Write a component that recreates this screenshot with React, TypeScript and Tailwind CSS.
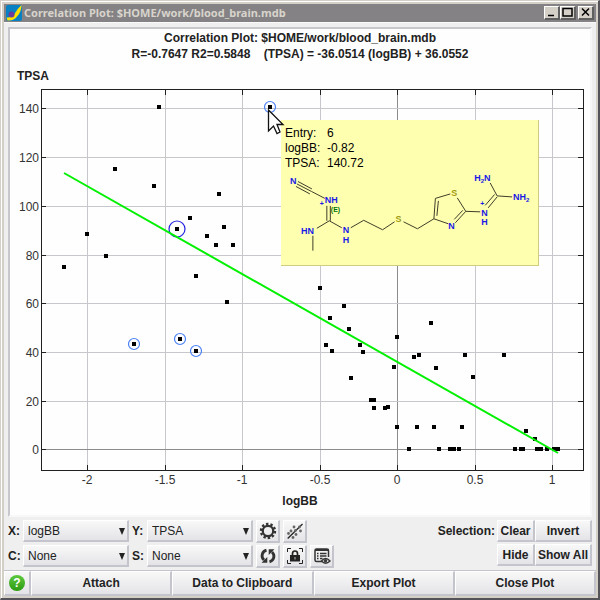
import React from "react";

type Point = [number, number];

const points: Point[] = [
  [159, 107], [115, 169], [154, 186], [219, 194], [190, 218], [177, 229], [224, 227],
  [207, 236], [216, 245], [233, 245], [87, 234], [106, 256], [64, 267], [196, 276],
  [270, 107], [227, 302], [134, 344], [180, 339], [196, 351], [320, 288], [344, 306],
  [330, 318], [349, 329], [326, 345], [332, 351], [360, 345], [363, 352], [394, 367],
  [351, 378], [371, 400], [374, 400], [374, 408], [385, 408], [388, 407], [397, 337],
  [431, 323], [414, 357], [419, 355], [436, 368], [465, 355], [473, 377], [504, 355],
  [397, 427], [417, 427], [434, 427], [462, 427], [526, 431], [535, 439], [409, 449],
  [439, 449], [450, 449], [454, 449], [459, 449], [515, 449], [521, 449], [523, 449],
  [537, 449], [541, 449], [547, 449], [554, 449], [558, 449],
];

const selected: Point[] = [[270, 107], [134, 344], [180, 339], [196, 351]];

const xTicks: [number, string][] = [
  [87, "-2"], [165, "-1.5"], [242, "-1"], [320, "-0.5"], [397, "0"], [475, "0.5"], [552, "1"],
];
const yTicks: [number, string][] = [
  [108, "140"], [157, "120"], [206, "100"], [255, "80"], [303, "60"], [352, "40"], [401, "20"], [449, "0"],
];

function Chart() {
  return (
    <svg viewBox="10 84 580 408" className="block w-full" role="img" aria-label="TPSA against logBB">
      <g shapeRendering="crispEdges">
        {xTicks.map(([x, t]) => (
          <line key={t} x1={x + 0.5} x2={x + 0.5} y1={90} y2={470} stroke={t === "0" ? "#8c8c8c" : "#c8c8cc"} />
        ))}
        {yTicks.map(([y, t]) => (
          <line key={t} x1={42} x2={583} y1={y + 0.5} y2={y + 0.5} stroke={t === "0" ? "#8c8c8c" : "#c8c8cc"} />
        ))}
        <rect x={41.5} y={89.5} width={542} height={381} fill="none" stroke="#202020" />
        {xTicks.map(([x, t]) => (
          <path key={t} d={`M${x + 0.5} 90v5M${x + 0.5} 465v5`} stroke="#202020" />
        ))}
        {yTicks.map(([y, t]) => (
          <path key={t} d={`M42 ${y + 0.5}h4M578 ${y + 0.5}h5`} stroke="#202020" />
        ))}
      </g>
      <g fontFamily="'Liberation Sans', Arial, sans-serif" fill="#333333">
        {xTicks.map(([x, t]) => (
          <text key={t} x={x} y={484} textAnchor="middle" className="text-xs">{t}</text>
        ))}
        {yTicks.map(([y, t]) => (
          <text key={t} x={39} y={y + 5} textAnchor="end" className="text-xs">{t}</text>
        ))}
      </g>
      <g shapeRendering="crispEdges">
        {points.map(([x, y], i) => (
          <rect key={i} x={x - 2} y={y - 2} width={4} height={4} fill="#000" />
        ))}
      </g>
      {selected.map(([x, y]) => (
        <circle key={x} cx={x} cy={y} r={5.5} fill="none" stroke="#4a80f5" strokeWidth={1.2} />
      ))}
      <circle cx={177} cy={229} r={8} fill="none" stroke="#2222e0" strokeWidth={1.2} />
      <line x1={64} y1={173} x2={558} y2={453} stroke="#00f000" strokeWidth={2} />
    </svg>
  );
}

function Molecule() {
  return (
    <svg viewBox="281 172 258 94" className="block w-full" role="img" aria-label="Molecular structure">
      <g fill="none" stroke="#3c3c28" strokeWidth={1}>
        <path d="M298 182.500L312 190M297 185L311.500 192.500M296 187.500L310 195M311.500 192.500L325 199.500" />
        <path d="M327 207V222M330.500 207V222M329.500 222L317 229.500M329.500 222L342 229M313 237V252" />
        <path d="M351 229L364 221.500L383 231L395 223M404 223L418 230L434.500 220L436 199.500L451 195M437.500 217L439 202M434.500 220L449 225M456 224L466.500 212.500M455 220.500L463.500 211.500M466.500 212.500L458 199M466.500 212.500L481 213M489 209L498 198M486 206.500L495.500 195.500M498 197L491 184M498 197L513 198" />
      </g>
      <g fontFamily="'Liberation Sans', Arial, sans-serif" fontWeight={700} fontSize={9} fill="#1a1ae6">
        <text x={290} y={185}>N</text>
        <text x={325} y={204}>NH</text>
        <text x={320} y={207} fontSize={7}>+</text>
        <text x={301} y={235}>HN</text>
        <text x={343} y={234}>N</text>
        <text x={343} y={244}>H</text>
        <text x={449} y={230}>N</text>
        <text x={482} y={217}>N</text>
        <text x={482} y={226}>H</text>
        <text x={481} y={207} fontSize={7}>+</text>
        <text x={475} y={182}>H<tspan fontSize={6} dy={2}>2</tspan><tspan dy={-2}>N</tspan></text>
        <text x={514} y={201}>NH<tspan fontSize={6} dy={2}>2</tspan></text>
        <text x={331} y={213} fontSize={7} fill="#007000">(E)</text>
        <text x={396} y={223} fill="#a09a10">S</text>
        <text x={452} y={197} fill="#a09a10">S</text>
      </g>
    </svg>
  );
}

function EntryTip() {
  const rows = [["Entry:", "6"], ["logBB:", "-0.82"], ["TPSA:", "140.72"]];
  return (
    <div className="absolute left-[271px] top-9 w-[258px] border-r border-b border-[#d0cc80] bg-[#ffffb0]">
      <dl className="grid grid-cols-[42px_1fr] px-1 pt-[6px] text-xs leading-[15px] text-black">
        {rows.map(([k, v]) => (
          <React.Fragment key={k}>
            <dt>{k}</dt>
            <dd>{v}</dd>
          </React.Fragment>
        ))}
      </dl>
      <Molecule />
    </div>
  );
}

function Pointer() {
  return (
    <svg viewBox="0 0 18 28" className="absolute left-[257px] top-[25px] h-7 w-[18px]" aria-hidden="true">
      <path d="M1.500 1L16 15.500H10L13 23L10 24.500L6.500 17L1.500 22Z" fill="#fff" stroke="#111" strokeWidth={1.300} />
    </svg>
  );
}

const raised =
  "flex items-center justify-center border-t border-l border-r-2 border-b-2 border-t-white border-l-white border-r-[#c4c4cc] border-b-[#c4c4cc] bg-linear-to-b from-[#f8f8f8] to-[#e4e4e8]";

function Picker({ label, value, options }: { label: string; value: string; options: string[] }) {
  return (
    <label className="flex items-center font-bold">
      <span className="w-[15px]">{label}:</span>
      <span className="relative block">
        <select
          defaultValue={value}
          className="block h-[22px] w-[106px] appearance-none border-t border-l border-r-2 border-b-2 border-t-white border-l-white border-r-[#c4c4cc] border-b-[#c4c4cc] bg-linear-to-b from-[#f8f8f8] to-[#e4e4e8] pl-1 text-xs font-normal"
        >
          {options.map((o) => (
            <option key={o}>{o}</option>
          ))}
        </select>
        <svg viewBox="0 0 6 7" className="pointer-events-none absolute top-2 right-1 h-[7px] w-[6px]" aria-hidden="true">
          <path d="M0 0H6L3 7Z" fill="#222" />
        </svg>
      </span>
    </label>
  );
}

function IconButton({ label, children }: { label: string; children: React.ReactNode }) {
  return (
    <button type="button" aria-label={label} className={`${raised} h-[23px] w-6`}>
      <svg viewBox="0 0 18 18" className="h-[18px] w-[18px] shrink-0" aria-hidden="true">
        {children}
      </svg>
    </button>
  );
}

function GearIcon() {
  return (
    <g stroke="#333" fill="none">
      <circle cx={9} cy={9} r={5.2} strokeWidth={2.2} />
      <circle cx={9} cy={9} r={7} strokeWidth={2.4} strokeDasharray="2.4 1.998" />
    </g>
  );
}

function ScatterIcon() {
  return (
    <g fill="#666">
      <path d="M1.700 16.500L16.500 2" stroke="#222" strokeWidth={1.300} />
      {[[8, 5], [13.5, 5], [5, 9], [9.5, 8.5], [14.5, 9], [2.5, 11.5], [10, 12.5], [7, 15.5]].map(([x, y], i) => (
        <circle key={i} cx={x} cy={y} r={1.4} />
      ))}
    </g>
  );
}

function RefreshIcon() {
  return (
    <g fill="none" stroke="#333" strokeWidth={2.8}>
      <path d="M7.500 3.200C3 4.500 1.500 9.500 5 13M10.500 14.800C15 13.500 16.500 8.500 13 5" />
      <path d="M2.500 15.800H8.300V10ZM15.500 2.200H9.700V8Z" fill="#333" stroke="none" />
    </g>
  );
}

function LockIcon() {
  return (
    <g fill="none" stroke="#222">
      <path d="M1.500 5V1.500H5M13 1.500H16.500V5M16.500 13V16.500H13M5 16.500H1.500V13" />
      <path d="M6.500 8V6.500A2.500 2.500 0 0 1 11.500 6.500V8" strokeWidth={1.700} />
      <path d="M4 8H14V14.500H4Z" fill="#222" stroke="none" />
      <path d="M9 10V12.500" stroke="#bbb" />
    </g>
  );
}

function TableEyeIcon() {
  return (
    <g fill="none" stroke="#333">
      <path d="M9 14.500H3.500Q2 14.500 2 13V3.500Q2 2 3.500 2H14Q15.500 2 15.500 3.500V10" strokeWidth={1.500} />
      <path d="M2 3H15.500" strokeWidth={2} />
      <path d="M4 6.500H5.500M4 9H5.500M4 11.500H5.500M7 6.500H13.500M7 9H13.500M7 11.500H9.500" strokeWidth={1.300} />
      <path d="M8.500 14Q12.500 9 17 14Q12.500 18.500 8.500 14Z" fill="#eee" strokeWidth={1.400} />
      <circle cx={12.500} cy={13.800} r={1.300} fill="#333" />
    </g>
  );
}

function TextButton({ children }: { children: string }) {
  return (
    <button type="button" className={`${raised} h-[22px] w-full font-bold whitespace-nowrap`}>
      {children}
    </button>
  );
}

function CaptionButton({ label, d }: { label: string; d: string }) {
  return (
    <button
      type="button"
      aria-label={label}
      className="h-[14px] w-4 border-t border-l border-r-2 border-b-2 border-t-white border-l-white border-r-[#606060] border-b-[#606060] bg-[#d4d0c8]"
    >
      <svg viewBox="0 0 13 11" className="block h-[11px] w-[13px]" aria-hidden="true">
        <path d={d} fill="none" stroke="#000" strokeWidth={1.500} />
      </svg>
    </button>
  );
}

export default function App() {
  return (
    <main className="min-h-[600px] border-t border-l border-r-2 border-b-2 border-t-[#d4d0c8] border-l-[#d4d0c8] border-r-[#55535a] border-b-[#55535a] bg-[#eeefee] font-['Liberation_Sans',Arial,sans-serif] text-xs text-[#222]">
      <div className="border-t border-l border-t-white border-l-white">
        <div className="border-2 border-[#d4d0c8]">
          <header className="flex h-[18px] items-center bg-[#848284] px-[2px]">
            <svg viewBox="0 0 16 16" className="mr-[2px] h-4 w-4" aria-hidden="true">
              <rect width={16} height={16} rx={2} fill="#0880c4" />
              <path d="M15.500 0Q15.500 7 11 11.500Q8 16 1.500 15.500L0.500 12.500Q6 13 8.500 9Q11 4 15.500 0Z" fill="#ffe000" />
              <circle cx={5.500} cy={9.500} r={3} fill="#6a3c9c" />
            </svg>
            <h1 className="flex-1 font-['Noto_Sans',sans-serif] text-[11px] font-bold text-[#d8d4cc]">
              Correlation Plot: $HOME/work/blood_brain.mdb
            </h1>
            <CaptionButton label="Minimize" d="M3 8.500H9" />
            <CaptionButton label="Maximize" d="M2 1.500H11V9H2Z" />
            <span className="w-[2px]" />
            <CaptionButton label="Close" d="M3 1.500L10 8.500M10 1.500L3 8.500" />
          </header>

          <div className="border-t border-[#fafafa] px-1 pt-1">
            <section className="border-2 border-[#c8c8cc] border-r-[#f8f8f8] border-b-[#f8f8f8] bg-[#fefefe]">
              <div className="pt-px text-center font-bold leading-4">
                <p>Correlation Plot: $HOME/work/blood_brain.mdb</p>
                <p className="whitespace-pre">R=-0.7647 R2=0.5848    (TPSA) = -36.0514 (logBB) + 36.0552</p>
              </div>
              <p className="px-[7px] pt-[6px] leading-4 font-bold">TPSA</p>
              <div className="relative">
                <Chart />
                <EntryTip />
                <Pointer />
              </div>
              <p className="pt-px pb-[6px] text-center leading-4 font-bold">logBB</p>
            </section>

            <div className="flex items-start justify-between pt-[3px] pb-[2px]">
              <div className="flex flex-col gap-[2px]">
                <div className="flex items-start gap-[3px]">
                  <Picker label="X" value="logBB" options={["logBB", "TPSA"]} />
                  <Picker label="Y" value="TPSA" options={["TPSA", "logBB"]} />
                  <IconButton label="Settings"><GearIcon /></IconButton>
                  <IconButton label="Regression line"><ScatterIcon /></IconButton>
                </div>
                <div className="flex items-start gap-[3px]">
                  <Picker label="C" value="None" options={["None"]} />
                  <Picker label="S" value="None" options={["None"]} />
                  <IconButton label="Refresh"><RefreshIcon /></IconButton>
                  <IconButton label="Lock range"><LockIcon /></IconButton>
                  <IconButton label="Show table"><TableEyeIcon /></IconButton>
                </div>
              </div>
              <div className="grid grid-cols-[auto_38px_57px] items-center gap-y-[2px]">
                <span className="pr-[2px] font-bold">Selection:</span>
                <TextButton>Clear</TextButton>
                <TextButton>Invert</TextButton>
                <span />
                <TextButton>Hide</TextButton>
                <TextButton>Show All</TextButton>
              </div>
            </div>
          </div>

          <footer className="flex h-[26px] border-t border-[#c4c4cc]">
            <button type="button" aria-label="Help" className={`${raised} w-[27px]`}>
              <span className="flex h-4 w-4 items-center justify-center rounded-full bg-linear-to-b from-[#5cc83c] to-[#2c9c10] text-xs font-bold text-white">?</span>
            </button>
            {["Attach", "Data to Clipboard", "Export Plot", "Close Plot"].map((t) => (
              <button key={t} type="button" className={`${raised} flex-1 font-bold`}>{t}</button>
            ))}
          </footer>
        </div>
      </div>
    </main>
  );
}
